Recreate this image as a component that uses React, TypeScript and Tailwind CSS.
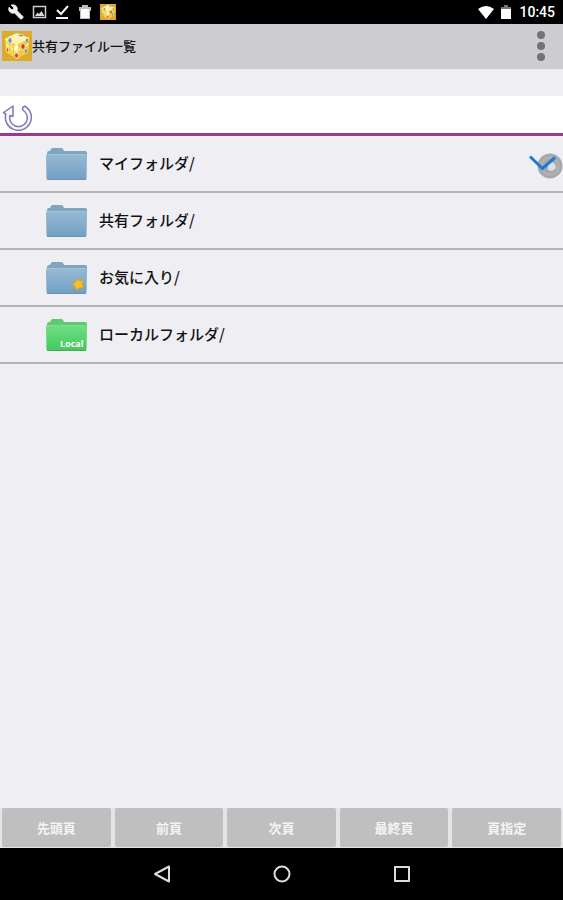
import { useState } from "react";

type FolderKind = "plain" | "favorite" | "local";

const folders: { id: string; name: string; kind: FolderKind }[] = [
  { id: "my", name: "マイフォルダ/", kind: "plain" },
  { id: "shared", name: "共有フォルダ/", kind: "plain" },
  { id: "favorite", name: "お気に入り/", kind: "favorite" },
  { id: "local", name: "ローカルフォルダ/", kind: "local" },
];

const pagerButtons = ["先頭頁", "前頁", "次頁", "最終頁", "頁指定"];

function CubeIcon({ className }: { className: string }) {
  return (
    <svg viewBox="0 0 30 30" className={className} aria-hidden="true">
      <rect width="30" height="30" fill="#deaa2c" />
      <path d="M3 8 15 2l12 5-1 14-11 7L4 21z" fill="#f8dc5c" />
      <path d="M3 8 15 2l12 5-12 6z" fill="#fdf0a6" />
      <path d="M15 13l12-6-1 14-11 7z" fill="#f3cd42" />
      <path
        d="M3 8l12 5 12-6M15 13v15M4 14l11 6 12-7M7 5l12 6M11 4l12 5M19 4 7 10"
        stroke="#fff8cc"
        strokeWidth="1"
        fill="none"
      />
      <path d="M8 11v13M11.500 12v14M19 12v14M23 10v13" stroke="#e6b93a" strokeWidth=".7" fill="none" />
      <g stroke="#fff6cf" strokeWidth=".6">
        <ellipse cx="8" cy="9.500" rx="1.900" ry="2.700" fill="#5f95b0" />
        <ellipse cx="19" cy="4.500" rx="2.400" ry="1.300" fill="#8299a0" />
        <ellipse cx="25" cy="9.500" rx="1.500" ry="2.600" fill="#7093a0" />
        <ellipse cx="21" cy="15.500" rx="2" ry="2.800" fill="#c73a2c" />
        <ellipse cx="5.500" cy="19" rx="1.300" ry="2.200" fill="#d4622b" />
        <ellipse cx="14.500" cy="24.500" rx="2" ry="2.600" fill="#cb4733" />
        <ellipse cx="24" cy="20" rx="1.400" ry="2.200" fill="#5d8398" />
        <ellipse cx="14" cy="17" rx="1.800" ry="2.400" fill="#fffbe2" />
      </g>
    </svg>
  );
}

function ReloadIcon() {
  return (
    <svg
      viewBox="0 0 32 30"
      className="h-[30px] w-8"
      fill="#f7f7ff"
      stroke="#7d7ab0"
      strokeWidth="1.500"
      strokeLinejoin="round"
      aria-hidden="true"
    >
      <path d="M1.500 11.500 11 5v10.500l-3-1A8.800 8.800 0 1 0 21.500 9.500a2 2 0 0 1 2.600-3.600A13 13 0 1 1 3.800 13z" />
    </svg>
  );
}

function FolderIcon({ kind }: { kind: FolderKind }) {
  const local = kind === "local";
  const id = `folder-${kind}`;
  return (
    <svg viewBox="0 0 41 34" className="h-[34px] w-[41px] shrink-0" aria-hidden="true">
      <defs>
        <linearGradient id={id} x1="0" y1="0" x2="0" y2="1">
          <stop offset="0" stopColor={local ? "#72df86" : "#98bad3"} />
          <stop offset="1" stopColor={local ? "#40c85c" : "#709fc3"} />
        </linearGradient>
      </defs>
      <path
        d="M1 8V5q0-2 2-2h1l1-2q.500-1 2-1h8q1.500 0 2 1l1 2h21q2 0 2 2v4z"
        fill={local ? "#5ecb70" : "#7fa5c0"}
      />
      <path d="M0 8q0-2 2-2h37q2 0 2 2l-.500 22q0 2-2 2h-36q-2 0-2-2z" fill={`url(#${id})`} />
      <path d="M1 6.500h39" stroke={local ? "#84dc93" : "#a3c2d6"} strokeWidth="1" />
      <path d="M1 31.500h39" stroke={local ? "#4aa85b" : "#6d92ae"} strokeWidth="1" />
      {kind === "favorite" && (
        <path
          d="M31 16.500l2.500 2.500 4-.500-1.500 4 2 3.500-4.500-.300-3.500 2.300-1-4-3.500-2 4-1.500z"
          fill="#fbc024"
          stroke="#d99a25"
          strokeWidth=".8"
        />
      )}
      {local && (
        <text x="14" y="28" fill="#ffffff" className="font-['Open_Sans',sans-serif] text-[9px] font-bold">
          Local
        </text>
      )}
    </svg>
  );
}

function SelectedMark() {
  return (
    <svg viewBox="0 0 34 28" className="h-7 w-[34px]" aria-hidden="true">
      <circle cx="21" cy="15" r="12.500" fill="#a5a8ad" />
      <circle cx="21" cy="15" r="8.500" fill="none" stroke="#b6b2b2" strokeWidth="2" />
      <path d="M19 14l3-4 4 3 1 4-4 3-4-1z" fill="#dedee2" />
      <path d="M1 5.500l12.500 12L26 6.500" fill="none" stroke="#1b7bd2" strokeWidth="3" />
    </svg>
  );
}

function StatusBar() {
  return (
    <div className="flex h-6 shrink-0 items-center bg-black px-2 text-white">
      <div className="flex items-center gap-[7px]">
        <svg viewBox="0 0 24 24" className="h-4 w-4" fill="#f2f2f2" stroke="#f2f2f2" aria-hidden="true">
          <path d="M22.700 19l-9.100-9.100c.9-2.300.4-5-1.500-6.900-2-2-5-2.400-7.400-1.300L9 6 6 9 1.600 4.700C.4 7.100.9 10.100 2.900 12.100c1.900 1.900 4.600 2.400 6.900 1.500l9.100 9.100c.4.4 1 .4 1.400 0l2.300-2.300c.5-.4.5-1.100.1-1.400z" />
        </svg>
        <svg viewBox="0 0 16 16" className="h-4 w-4" fill="none" stroke="#cfcfcf" strokeWidth="1.500" aria-hidden="true">
          <rect x="2.500" y="2.500" width="12" height="11" />
          <path d="M4 12l2.500-3.500L8 10l2.500-3 3 5z" fill="#d8d8d8" stroke="none" />
        </svg>
        <svg viewBox="0 0 16 16" className="h-4 w-4" fill="none" stroke="#f2f2f2" strokeWidth="2" aria-hidden="true">
          <path d="M3 6l4 4 7-8M2 14h12" />
        </svg>
        <svg viewBox="0 0 16 16" className="h-4 w-4" aria-hidden="true">
          <path d="M2 3h3V1h6v2h3v4h-1v8H3V7H2z" fill="#bdbdbd" />
          <path d="M4 5h8v9H4z" fill="#fafafa" />
        </svg>
        <CubeIcon className="h-4 w-4" />
      </div>
      <div className="ml-auto flex items-center gap-1">
        <svg viewBox="0 0 18 14" className="h-[14px] w-[18px]" fill="#ffffff" aria-hidden="true">
          <path d="M1 4q8-6 16 0L9 14z" />
        </svg>
        <svg viewBox="0 0 14 14" className="h-[14px] w-[14px]" aria-hidden="true">
          <path d="M2 2h3V0h4v2h3v3H2z" fill="#777777" />
          <path d="M2 4h10v10H2z" fill="#ffffff" />
        </svg>
        <span className="ml-[2px] font-[Roboto,sans-serif] text-sm leading-6 font-medium">10:45</span>
      </div>
    </div>
  );
}

function NavigationBar() {
  return (
    <nav className="flex h-[52px] shrink-0 items-center justify-center gap-24 bg-black text-[#dddddd]">
      <button type="button" aria-label="戻る" className="h-6 w-6">
        <svg viewBox="0 0 24 24" fill="none" stroke="currentColor" strokeWidth="2" strokeLinejoin="round">
          <path d="M19 4.500v15L5 12z" />
        </svg>
      </button>
      <button type="button" aria-label="ホーム" className="h-6 w-6">
        <svg viewBox="0 0 24 24" fill="none" stroke="currentColor" strokeWidth="2">
          <circle cx="12" cy="12" r="7.500" />
        </svg>
      </button>
      <button type="button" aria-label="最近使ったアプリ" className="h-6 w-6">
        <svg viewBox="0 0 24 24" fill="none" stroke="currentColor" strokeWidth="2" strokeLinejoin="round">
          <rect x="5" y="5" width="14" height="14" />
        </svg>
      </button>
    </nav>
  );
}

export default function App() {
  const [selected, setSelected] = useState("my");

  return (
    <div className="flex min-h-screen flex-col bg-[#efeef3] font-['Noto_Sans_CJK_JP',sans-serif] text-[#111111]">
      <StatusBar />

      <header className="flex h-[45px] shrink-0 items-center bg-[#cdccd1] pr-2 pb-[2px] pl-[2px]">
        <CubeIcon className="h-[30px] w-[30px]" />
        <h1 className="text-[13px] leading-5 font-medium">共有ファイル一覧</h1>
        <button type="button" aria-label="メニュー" className="ml-auto flex h-9 w-7 items-center justify-center">
          <svg viewBox="0 0 10 32" className="h-8 w-[10px]" fill="#727277">
            <circle cx="5" cy="5" r="4" />
            <circle cx="5" cy="16" r="4" />
            <circle cx="5" cy="27" r="4" />
          </svg>
        </button>
      </header>

      <main className="flex grow flex-col">
        <div className="mt-[27px] flex h-10 items-end border-b-3 border-[#983b8f] bg-white pb-[2px] pl-[2px]">
          <button type="button" aria-label="再読み込み">
            <ReloadIcon />
          </button>
        </div>

        <ul>
          {folders.map((folder) => (
            <li key={folder.id} className="border-b-2 border-[#b4b4b8]">
              <button
                type="button"
                onClick={() => setSelected(folder.id)}
                className="flex h-[55px] w-full items-center pt-[2px] pl-[46px] text-left"
              >
                <FolderIcon kind={folder.kind} />
                <span className="ml-3 pb-1 text-[15px] leading-6 font-medium">{folder.name}</span>
                {selected === folder.id && (
                  <span className="ml-auto">
                    <SelectedMark />
                  </span>
                )}
              </button>
            </li>
          ))}
        </ul>

        <div className="mt-auto grid grid-cols-5 gap-1 bg-[#e4e4e7] px-[2px] pb-[1px]">
          {pagerButtons.map((label) => (
            <button
              key={label}
              type="button"
              className="h-[39px] rounded-xs bg-[#bfbfbf] text-[13px] leading-5 font-bold text-[#f4f4f4]"
            >
              {label}
            </button>
          ))}
        </div>
      </main>

      <NavigationBar />
    </div>
  );
}
